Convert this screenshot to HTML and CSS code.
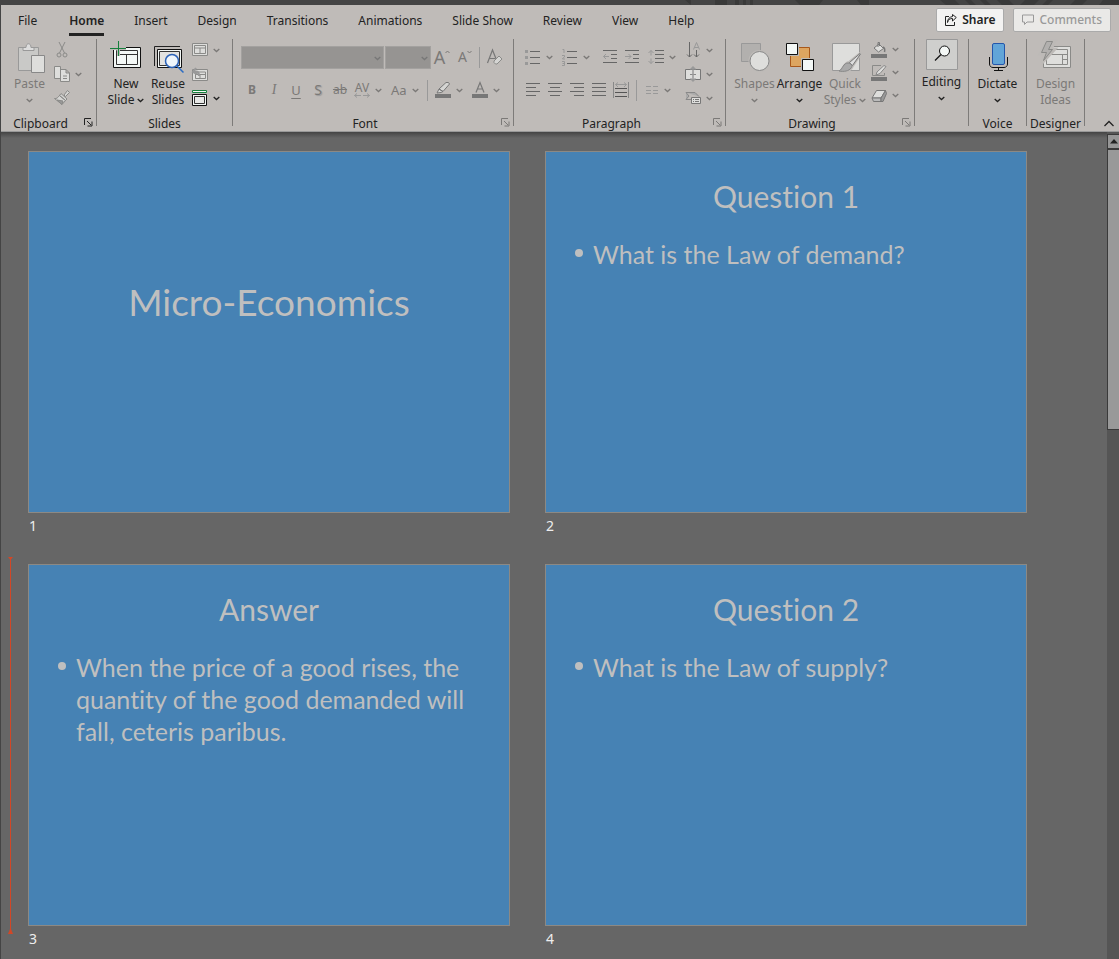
FILE: index.html
```html
<!DOCTYPE html>
<html lang="en">
<head>
<meta charset="utf-8">
<title>Micro-Economics</title>
<link rel="stylesheet" href="styles.css">
</head>
<body>
<svg class="defs" aria-hidden="true">
  <symbol id="chev" viewBox="0 0 7 5"><path d="M.7 1 3.5 3.6 6.300 1" fill="none" stroke="currentColor" stroke-width="1.300"/></symbol>
  <symbol id="launch" viewBox="0 0 9 9"><path d="M.5 7V.5H7M3 3l4 4M8 3.500V8H3.500" fill="none" stroke="currentColor"/></symbol>
</svg>
<div class="strip"><svg width="434" height="5" viewBox="0 0 434 5"><path d="M0 0h6v5zM30 0h12v5H30zM50 0h4v5h-4zM58 0h3v5h-3zM65 0h3v5h-3zM110 0h28l-4 5h-19zM172 0h12v5h-8zM255 0h15l5 5h-14zM280 0h6l5 5h-6zM295 0h6l5 5h-6zM312 0h12l5 5h-12zM340 0h14l-5 5h-14zM362 0h6l-5 5h-6zM390 0h12l-5 5h-12zM418 0h16v5h-20z" fill="#393939"/></svg></div>
<header class="ribbon">
  <div class="top">
    <nav class="tabs">
      <button class="tab file">File</button><button class="tab active"><span>Home</span></button><button class="tab">Insert</button><button class="tab">Design</button><button class="tab">Transitions</button><button class="tab">Animations</button><button class="tab">Slide Show</button><button class="tab">Review</button><button class="tab">View</button><button class="tab">Help</button>
    </nav>
    <div class="actions">
      <button class="act"><svg width="12" height="12" viewBox="0 0 12 12" fill="none" stroke="#222"><path d="M4 2.500H.5v9h9V8M2.500 8.500C3 5.500 5 4.500 7.500 4.500V7L11.300 3.500 7.500.5v2C4.500 3 2.500 5 2.500 8.500z"/></svg>Share</button>
      <button class="act muted"><svg width="12" height="12" viewBox="0 0 12 12" fill="none" stroke="#999"><path d="M.5 1h11v7H5l-2.500 2.500V8h-2z"/></svg>Comments</button>
    </div>
  </div>
  <div class="groups">
    <section class="group clipboard">
      <div class="body">
        <button class="big off"><svg width="32" height="32" viewBox="0 0 32 32"><path d="M4.500 5.500h20v23h-20z" fill="#c9c9c7" stroke="#999"/><path d="M9 8.500V5.500h3c0-5 5-5 5 0h3v3z" fill="#ddd" stroke="#999"/><path d="M17.500 13.500h13v17h-13z" fill="#dededc" stroke="#888"/></svg><span>Paste</span><span><svg class="chev"><use href="#chev"/></svg></span></button>
        <div class="col">
          <button class="menu off" aria-label="Cut"><svg width="16" height="16" viewBox="0 0 16 16" fill="none" stroke="#8a8a88"><path d="M5 0l5.500 11M11 0 5.500 11"/><circle cx="5" cy="13" r="2"/><circle cx="11" cy="13" r="2"/></svg></button>
          <button class="menu off" aria-label="Copy"><svg width="16" height="16" viewBox="0 0 16 16" fill="#dededc" stroke="#8a8a88"><path d="M.5.5h6v12h-6zM6.500 3.500H12l3.500 3.500v8.500h-9zM12 3.500V7h3.500M9 10h4M9 12.500h4"/></svg><svg class="chev"><use href="#chev"/></svg></button>
          <button class="menu off" aria-label="Format Painter"><svg width="16" height="16" viewBox="0 0 16 16" fill="#d5d5d3" stroke="#8a8a88"><path d="M10 5l3.500-4.500 2 2L11.500 6.500zM7 3.500l6 5.500-1.500 1.500-6-5zM5.500 5.500l6 5L8 14.500.5 8.500c2 .5 3.500-1 5-3z"/><path d="M3 10l6 1-1 3.500z" fill="#999"/></svg></button>
        </div>
      </div>
      <div class="name">Clipboard<button class="launch" aria-label="Clipboard options"><svg width="9" height="9"><use href="#launch"/></svg></button></div>
    </section>
    <section class="group slides">
      <div class="body">
        <button class="big"><svg width="32" height="32" viewBox="0 0 32 32"><path d="M3.500 5.500h27v20h-27z" fill="#f4f8f6" stroke="#111"/><path d="M6.500 8.500h21v14h-21zM6.500 12.500h21M16.500 12.500v10" fill="none" stroke="#333"/><path d="M1 6.500h15M8.500-1v15" stroke="#bdbab7" stroke-width="3"/><path d="M0 6.500h16M8.500-1v15" stroke="#15803c"/></svg><span>New</span><span>Slide <svg class="chev"><use href="#chev"/></svg></span></button>
        <button class="big"><svg width="32" height="32" viewBox="0 0 32 32"><path d="M2.500 24V4.500H28" fill="none" stroke="#222"/><path d="M5.500 7.500h24v18h-24z" fill="#f4f8f6" stroke="#111"/><path d="M7.500 9.500h20v14h-20z" fill="#e2e2e0" stroke="#333"/><path d="m25 24 6.500 6.500" stroke="#2b6cc4" stroke-width="1.500"/><circle cx="20" cy="19" r="6.500" fill="#eef5fb" stroke="#2b62b8" stroke-width="1.500"/></svg><span>Reuse</span><span>Slides</span></button>
        <div class="col">
          <button class="menu off" aria-label="Layout"><svg width="16" height="16" viewBox="0 0 16 16" fill="#dededc" stroke="#8a8a88"><path d="M.5 1.500h15v12H.5zM2.500 3.500h11v8h-11zM2.500 6h11M8 6v6"/></svg><svg class="chev"><use href="#chev"/></svg></button>
          <button class="menu off" aria-label="Reset"><svg width="16" height="16" viewBox="0 0 16 16" fill="#dededc" stroke="#8a8a88"><path d="M.5 3.500h15v11H.5zM3.500 6h10v6.500h-10zM4 8.500h9.500M8 8v4.500"/><path d="M7 10c0-5-3-5-5-4M4 2 1 6l4 2" fill="none" stroke="#999" stroke-width="2"/></svg></button>
          <button class="menu" aria-label="Section"><svg width="16" height="16" viewBox="0 0 16 16" fill="#f4f8f6"><path d="M.5.500h14v2H.5z" stroke="#15803c"/><path d="M.5 4.500h14v11H.5z" stroke="#111"/><path d="M2.500 6.500h10v7h-10z" stroke="#333" fill="#e8e8e6"/></svg><svg class="chev"><use href="#chev"/></svg></button>
        </div>
      </div>
      <div class="name">Slides</div>
    </section>
    <section class="group font">
      <div class="body rows">
        <div class="row">
          <label class="combo wide"><select disabled aria-label="Font"><option></option></select><svg class="chev"><use href="#chev"/></svg></label>
          <label class="combo"><select disabled aria-label="Font size"><option></option></select><svg class="chev"><use href="#chev"/></svg></label>
          <button class="tool off grow" aria-label="Increase font size"><span class="up">A</span><svg class="tick" width="5" height="4" viewBox="0 0 5 4"><path d="M.5 3 2.500 1l2 2" fill="none" stroke="currentColor"/></svg></button>
          <button class="tool off shrink" aria-label="Decrease font size"><span>A</span><svg class="tick" width="5" height="4" viewBox="0 0 5 4"><path d="M.5 1 2.500 3l2-2" fill="none" stroke="currentColor"/></svg></button>
          <i class="sep"></i>
          <button class="tool off" aria-label="Clear formatting"><svg width="18" height="18" viewBox="0 0 18 18" fill="none" stroke="#777"><path d="M1.500 15 6.500 2l4 10M3 10.500h6" stroke-width="1.200"/><path d="m8 13 5-5 3 3-5 5H9.500L8 14.500z" fill="#d5d5d3" stroke="#8a8a88"/></svg></button>
        </div>
        <div class="row">
          <button class="tool off bold">B</button><button class="tool off ital">I</button><button class="tool off under">U</button><button class="tool off shade">S</button><button class="tool off strike">ab</button>
          <button class="menu off" aria-label="Character spacing"><span class="av">AV<svg width="16" height="5" viewBox="0 0 16 5"><path d="M3 .5l-2.500 2L3 4.500M.5 2.500H7M13 .5l2.500 2-2.500 2M15.500 2.500H9" fill="none" stroke="#999"/></svg></span><svg class="chev"><use href="#chev"/></svg></button>
          <button class="menu off aa">Aa<svg class="chev"><use href="#chev"/></svg></button>
          <i class="sep"></i>
          <button class="menu off" aria-label="Highlight"><svg width="16" height="16" viewBox="0 0 16 16" fill="#d5d5d3" stroke="#777"><path d="m4 7 7-6.500h2.500L14.500 2 8 9.500zM4 7l4 2.500-2 1-4 .500z"/><path d="M0 12h16v4H0z" fill="#777" stroke="none"/></svg><svg class="chev"><use href="#chev"/></svg></button>
          <button class="menu off" aria-label="Font color"><svg width="16" height="16" viewBox="0 0 16 16"><path d="M4 10.500 8 .5l4 10M5.300 7h5.400" fill="none" stroke="#777" stroke-width="1.200"/><path d="M0 12h16v4H0z" fill="#777"/></svg><svg class="chev"><use href="#chev"/></svg></button>
        </div>
      </div>
      <div class="name">Font<button class="launch off" aria-label="Font options"><svg width="9" height="9"><use href="#launch"/></svg></button></div>
    </section>
    <section class="group para">
      <div class="body">
        <div class="rows">
          <div class="row">
            <button class="menu off" aria-label="Bullets"><svg width="16" height="16" viewBox="0 0 16 16"><path d="M5 2.500h10M5 8.500h10M5 14.500h10" stroke="#666"/><path d="M0 1h3v3H0zM0 7h3v3H0zM0 13h3v3H0z" fill="#999"/></svg><svg class="chev"><use href="#chev"/></svg></button>
            <button class="menu off" aria-label="Numbering"><svg width="16" height="18" viewBox="0 0 16 18"><path d="M5 3.500h10M5 9.500h10M5 15.500h10" stroke="#666"/><path d="M.5 1.500H2V5M0 7.500h2.500v1.500L.5 10.500V11H3M0 13.500h2.500v4H0M.5 15.500h2" stroke="#999" fill="none"/></svg><svg class="chev"><use href="#chev"/></svg></button>
            <span class="pair"><button class="tool off" aria-label="Decrease indent"><svg width="14" height="14" viewBox="0 0 14 14" fill="none"><path d="M0 .5h14M8 4.500h6M8 8.500h6M0 12.500h14" stroke="#666"/><path d="M3 4 .5 6.500 3 9M.5 6.500H6" stroke="#999"/></svg></button><button class="tool off" aria-label="Increase indent"><svg width="14" height="14" viewBox="0 0 14 14" fill="none"><path d="M0 .5h14M8 4.500h6M8 8.500h6M0 12.500h14" stroke="#666"/><path d="M3.500 4 6 6.500 3.500 9M6 6.500H0" stroke="#999"/></svg></button></span>
            <button class="menu off" aria-label="Line spacing"><svg width="16" height="16" viewBox="0 0 16 16" fill="none"><path d="M7 1.500h9M7 5.500h9M7 9.500h9M7 13.500h9" stroke="#666"/><path d="M.5 4 3 1.500 5.500 4M3 1.500v5M.5 12 3 14.500 5.500 12M3 14.500v-5" stroke="#999"/></svg><svg class="chev"><use href="#chev"/></svg></button>
          </div>
          <div class="row">
            <button class="tool off" aria-label="Align left"><svg width="14" height="14" viewBox="0 0 14 14" stroke="#666"><path d="M0 .5h14M0 4.500h10M0 8.500h14M0 12.500h10"/></svg></button><button class="tool off" aria-label="Center"><svg width="14" height="14" viewBox="0 0 14 14" stroke="#666"><path d="M0 .5h14M2 4.500h10M0 8.500h14M2 12.500h10"/></svg></button><button class="tool off" aria-label="Align right"><svg width="14" height="14" viewBox="0 0 14 14" stroke="#666"><path d="M0 .5h14M4 4.500h10M0 8.500h14M4 12.500h10"/></svg></button><button class="tool off" aria-label="Justify"><svg width="14" height="14" viewBox="0 0 14 14" stroke="#666"><path d="M0 .5h14M0 4.500h14M0 8.500h14M0 12.500h14"/></svg></button><button class="tool off" aria-label="Distribute"><svg width="16" height="16" viewBox="0 0 16 16" fill="none"><path d="M.5 0v16M15.500 0v16" stroke="#888"/><path d="M2 6.500h12M2 10.500h12M2 14.500h12" stroke="#555"/><path d="M5 .5 2.500 2.500 5 5M11 .5l2.500 2L11 5M2.500 2.500h11" stroke="#999"/></svg></button>
            <i class="sep"></i>
            <button class="menu off" aria-label="Columns"><svg width="13" height="16" viewBox="0 0 13 16" stroke="#999"><path d="M0 4.500h5M7 4.500h5M0 8.500h5M7 8.500h5M0 11.500h5M7 11.500h5"/></svg><svg class="chev"><use href="#chev"/></svg></button>
          </div>
        </div>
        <div class="col">
          <button class="menu off" aria-label="Text direction"><svg width="16" height="16" viewBox="0 0 16 16" fill="none"><path d="M4.500 0v15M2 12.500 4.500 15 7 12.500M11.500 8v7M9 12.500l2.500 2.500 2.500-2.500" stroke="#666"/><path d="m8.500 7.500 3-7 3 7M9.500 5.500h4" stroke="#999"/></svg><svg class="chev"><use href="#chev"/></svg></button>
          <button class="menu off" aria-label="Align text"><svg width="16" height="16" viewBox="0 0 16 16"><path d="M.5 3.500h15v10H.5z" fill="#dededc" stroke="#777"/><path d="M5 8.500h6" stroke="#888"/><path d="M8 1v14M5.500 3.500 8 1l2.500 2.500M5.500 12.500 8 15l2.500-2.500" fill="none" stroke="#999" stroke-width="1.500"/></svg><svg class="chev"><use href="#chev"/></svg></button>
          <button class="menu off" aria-label="SmartArt"><svg width="16" height="16" viewBox="0 0 16 16"><path d="M1 2.500h9l4 4M1 9.500h5M1 2.500 4 6 1 9.500" fill="#aaa" stroke="#888"/><path d="M6.500 7.500h9v6h-9z" fill="#dededc" stroke="#777"/><path d="M8 9.500h1M10 9.500h4M8 11.500h1M10 11.500h4" stroke="#777"/></svg><svg class="chev"><use href="#chev"/></svg></button>
        </div>
      </div>
      <div class="name">Paragraph<button class="launch off" aria-label="Paragraph options"><svg width="9" height="9"><use href="#launch"/></svg></button></div>
    </section>
    <section class="group drawing">
      <div class="body">
        <button class="big off"><svg width="32" height="32" viewBox="0 0 32 32"><path d="M2.500 1.500h19v18h-19z" fill="#b2b0ae" stroke="#999"/><circle cx="20.500" cy="19" r="11" fill="#bdbab7"/><circle cx="20.500" cy="19" r="9.500" fill="#dededc" stroke="#888"/></svg><span>Shapes</span><span><svg class="chev"><use href="#chev"/></svg></span></button>
        <button class="big"><svg width="32" height="32" viewBox="0 0 32 32"><path d="M6.500 5.500h19v19h-19z" fill="#dda560" stroke="#a8581b"/><path d="M1 0h14v14H1zM17 16h14v14H17z" fill="#bdbab7"/><path d="M2.500 1.500h11v11h-11zM18.500 17.500h11v11h-11z" fill="#f4f8f6" stroke="#111"/></svg><span>Arrange</span><span><svg class="chev"><use href="#chev"/></svg></span></button>
        <button class="big off"><svg width="32" height="32" viewBox="0 0 32 32"><path d="M3.500 1.500h27v27h-27z" fill="#dededc" stroke="#999"/><path d="M20 20 31 11l1 1-8 12c-2 5-7 7-14 6 5-3 4-9 10-10z" fill="#bdbab7" stroke="#bdbab7" stroke-width="2"/><path d="M20.500 20.500 31 11.500l.5.500-8 11.500z" fill="#ddd" stroke="#777"/><path d="M10 29c4-2 4-8 9-8 3 0 5 3 3 5-2 3-7 4-12 3z" fill="#aaa" stroke="#888"/></svg><span>Quick</span><span>Styles <svg class="chev"><use href="#chev"/></svg></span></button>
        <div class="col tight">
          <button class="menu off" aria-label="Shape fill"><svg width="16" height="16" viewBox="0 0 16 16"><path d="m3 6 5-4 4.500 4.500L7.500 10z" fill="#dededc" stroke="#777"/><path d="M7 5V.5h1.500V4" fill="none" stroke="#777"/><path d="M12 5c2 1 2 3 1.500 5" stroke="#777" stroke-width="1.500" fill="none"/><path d="M0 12h16v4H0z" fill="#777"/></svg><svg class="chev"><use href="#chev"/></svg></button>
          <button class="menu off" aria-label="Shape outline"><svg width="16" height="16" viewBox="0 0 16 16"><path d="M10 .5H1.500v10h12V8" fill="none" stroke="#8a8a88"/><path d="m6 7 7-6.500 2 1L9 8.500 5 10z" fill="#dededc" stroke="#888"/><path d="M0 12h16v4H0z" fill="#777"/></svg><svg class="chev"><use href="#chev"/></svg></button>
          <button class="menu off" aria-label="Shape effects"><svg width="16" height="16" viewBox="0 0 16 16" stroke="#777"><path d="M5.500 2.500h9L10 10H1z" fill="#dededc"/><path d="M1 10h9v3.500H2.500z" fill="#bbb"/><path d="m14.500 2.500 1 3L12 13.500h-2V10z" fill="#999"/></svg><svg class="chev"><use href="#chev"/></svg></button>
        </div>
      </div>
      <div class="name">Drawing<button class="launch off" aria-label="Drawing options"><svg width="9" height="9"><use href="#launch"/></svg></button></div>
    </section>
    <section class="group editing">
      <div class="body">
        <button class="big"><svg class="boxed" width="32" height="31" viewBox="0 0 32 31"><path d="M.5.500h31v30H.5z" fill="#cfcfcd" stroke="#999"/><circle cx="18.500" cy="12" r="5" fill="#f4f8f6" stroke="#111"/><path d="m15 15.500-6 6" stroke="#111" stroke-width="1.300"/></svg><span>Editing</span><span><svg class="chev"><use href="#chev"/></svg></span></button>
      </div>
    </section>
    <section class="group voice">
      <div class="body">
        <button class="big"><svg width="32" height="32" viewBox="0 0 32 32"><rect x="10.500" y="1.500" width="12" height="21" rx="1.500" fill="#62a5d8" stroke="#2456ab"/><path d="M7.500 15v7c0 2 1.500 3.500 3.500 3.500h11c2 0 3.500-1.500 3.500-3.500v-7M16.500 25.500v3M12 28.500h9" fill="none" stroke="#111"/></svg><span>Dictate</span><span><svg class="chev"><use href="#chev"/></svg></span></button>
      </div>
      <div class="name">Voice</div>
    </section>
    <section class="group designer">
      <div class="body">
        <button class="big off"><svg width="32" height="32" viewBox="0 0 32 32"><path d="M3.500 4.500h27v21h-27z" fill="#dededc" stroke="#8a8a88"/><path d="M6.500 7.500h21v15h-21zM6.500 12.500h21M22.500 12.500v10M22.500 17.500h5" fill="none" stroke="#8a8a88"/><path d="M7-1h8l-4 8h4L2 21l3-9H0z" fill="#aaa8a6" stroke="#bdbab7" stroke-width="3"/><path d="M6.500-.5h6l-4 8h4l-9 11 3-8h-5z" fill="#b2b0ae" stroke="#8a8a88"/></svg><span>Design</span><span>Ideas</span></button>
      </div>
      <div class="name">Designer</div>
    </section>
    <button class="collapse" aria-label="Collapse the ribbon"><svg width="10" height="7" viewBox="0 0 10 7"><path d="M.5 6 5 1.500 9.500 6" fill="none" stroke="#222" stroke-width="1.300"/></svg></button>
  </div>
</header>
<main class="workspace">
  <div class="sorter">
    <figure><div class="slide cover"><h1>Micro-Economics</h1></div><figcaption>1</figcaption></figure>
    <figure><div class="slide"><h2>Question 1</h2><ul><li>What is the Law of demand?</li></ul></div><figcaption>2</figcaption></figure>
    <figure><div class="slide"><svg class="caret top-end" width="5" height="3" viewBox="0 0 5 3"><path d="M0 0h5L3 2.500H2z" fill="#d24726"/></svg><i class="caret line"></i><svg class="caret bottom-end" width="5" height="5" viewBox="0 0 5 5"><path d="M0 5h5L3 0H2z" fill="#d24726"/></svg><h2>Answer</h2><ul><li>When the price of a good rises, the quantity of the good demanded will fall, ceteris paribus.</li></ul></div><figcaption>3</figcaption></figure>
    <figure><div class="slide"><h2>Question 2</h2><ul><li>What is the Law of supply?</li></ul></div><figcaption>4</figcaption></figure>
  </div>
  <div class="scroll">
    <button class="arrow" aria-label="Scroll up"><svg width="8" height="5" viewBox="0 0 8 5"><path d="M0 4.500 4 0l4 4.500z" fill="#222"/></svg></button>
    <div class="thumb"></div>
  </div>
</main>
</body>
</html>
```
FILE: styles.css
```css
* { box-sizing: border-box; }
body {
  margin: 0;
  min-height: 100vh;
  display: flex;
  flex-direction: column;
  background: #444;
  color: #222;
  font: 12px/16px "Noto Sans", "Open Sans", sans-serif;
}
button {
  border: 0;
  padding: 0;
  background: none;
  color: inherit;
  font: inherit;
}
svg { display: block; flex: none; overflow: visible; }
.defs { display: none; }
.strip { height: 5px; display: flex; justify-content: flex-end; overflow: hidden; }
.ribbon {
  margin-left: 1px;
  background: #bfbbb8;
  border-bottom: 1px solid #999;
}
.top { display: flex; justify-content: space-between; height: 33px; }
.tabs { display: flex; padding-left: 2px; }
.tab { padding: 2px 15px 0; height: 30px; white-space: nowrap; }
.file { margin-right: 2px; }
.active { padding-top: 0; font-weight: 600; }
.active span { display: block; padding: 5px 0 4px; margin-top: 3px; border-bottom: 3px solid #222; }
.actions { display: flex; gap: 9px; padding: 3px 8px 0 0; }
.act {
  display: flex;
  align-items: center;
  gap: 5px;
  height: 24px;
  padding: 0 8px;
  border: 1px solid #aaa;
  border-radius: 2px;
  background: #f3f2f1;
  font-weight: 600;
}
.act.muted { color: #999; background: #eae9e7; font-weight: 500; }

.groups { display: flex; height: 93px; }
.group { position: relative; display: flex; flex-direction: column; flex: none; padding-right: 1px; }
.group::after {
  content: "";
  position: absolute;
  top: 1px;
  right: 0;
  bottom: 5px;
  width: 1px;
  background: #7d7b79;
}
.body { display: flex; flex: 1; }
.name { text-align: center; height: 16px; line-height: 18px; }
.launch { position: absolute; right: 4px; bottom: 4px; }
.clipboard { width: 96px; }
.clipboard .body { padding-left: 7px; }
.clipboard .big { width: 43px; }
.clipboard .name { padding-right: 16px; }
.slides { width: 136px; }
.slides .body { padding-left: 8px; }
.slides .big { width: 42px; }
.font { width: 281px; padding-left: 8px; }
.font .name { padding-right: 24px; }
.para { width: 212px; padding-left: 8px; }
.para .name { padding-right: 24px; }
.para .rows { width: 160px; }
.drawing { width: 189px; }
.drawing .body { padding-left: 6px; }
.drawing .big { width: 45px; }
.drawing .big:nth-child(3) { width: 46px; }
.drawing .name { padding-right: 16px; }
.editing { width: 54px; }
.voice, .designer { width: 58px; }
.editing .big, .voice .big, .designer .big { width: 100%; }
.editing .big { padding-top: 1px; }

.big {
  display: flex;
  flex-direction: column;
  align-items: center;
  align-self: flex-start;
  padding-top: 4px;
}
.big > svg { margin-bottom: 2px; }
.big > span { display: flex; align-items: center; justify-content: center; gap: 3px; height: 16px; white-space: nowrap; }
.big > .boxed { margin-bottom: 4px; }
.chev { width: 7px; height: 5px; }
.off { color: #7b7977; }
.col { display: flex; flex-direction: column; }
.col .menu { height: 24px; }
.tight .menu { height: 23px; }
.menu { display: flex; align-items: center; gap: 5px; width: 37px; height: 24px; padding-left: 3px; }
.rows { display: flex; flex-direction: column; gap: 9px; padding-top: 7px; }
.row { display: flex; align-items: center; height: 24px; }
.tool { display: flex; align-items: center; justify-content: center; width: 22px; height: 24px; }
.pair { display: flex; padding: 0 2px 0 3px; }
.sep { width: 1px; height: 21px; margin: 0 4px 0 2px; background: #999; }
.para .sep { margin: 0 6px 0 4px; }
.combo { position: relative; width: 46px; height: 23px; }
.combo.wide { width: 143px; margin-right: 1px; }
.combo select {
  display: block;
  appearance: none;
  width: 100%;
  height: 100%;
  border: 1px solid #a3a19f;
  border-radius: 0;
  background: #969492;
  opacity: 1;
}
.combo .chev { position: absolute; right: 3px; top: 10px; color: #777; }
.tool .tick { align-self: flex-start; margin-top: 5px; }
.grow { font-size: 18px; }
.grow, .shrink { margin-right: 1px; }
.shrink { font-size: 14px; }
.bold { font-weight: 700; }
.ital { font-family: "Liberation Serif", serif; font-style: italic; font-size: 14px; }
.under { font-size: 13px; text-decoration: underline; text-underline-offset: 3px; }
.shade { text-shadow: 1px 1px 1px #999; font-size: 14px; }
.strike { text-decoration: line-through; }
.av { width: 16px; line-height: 11px; }
.aa { font-size: 13px; }
.collapse { margin-left: auto; align-self: flex-end; padding: 0 5px 4px; }

.workspace {
  flex: 1;
  display: flex;
  margin-left: 1px;
  background: linear-gradient(#444, #666 6px);
}
.sorter {
  flex: 1;
  display: grid;
  grid-template-columns: repeat(auto-fill, 482px);
  align-content: start;
  gap: 27px 35px;
  padding: 19px 27px 0;
}
figure { margin: 0; }
figcaption { height: 24px; padding: 4px 1px; font-size: 14px; line-height: 18px; color: #eee; }
.slide {
  position: relative;
  aspect-ratio: 482 / 362;
  padding: 24px 30px;
  border: 1px solid #8c8984;
  background: #4682b4;
  color: #bfbfbf;
  font-family: Lato, sans-serif;
  font-variant-ligatures: none;
}
.cover { display: flex; align-items: center; justify-content: center; padding-bottom: 84px; }
h1, h2 { margin: 0; font-weight: 400; text-align: center; }
h1 { font-size: 37px; line-height: 44px; }
h2 { font-size: 30px; line-height: 40px; }
ul { margin: 22px 0 0; padding: 0 0 0 17px; list-style: none; font-size: 25px; line-height: 32px; }
li::before {
  content: "";
  float: left;
  width: 8px;
  height: 8px;
  margin: 11px 0 0 -18px;
  border-radius: 50%;
  background: currentColor;
}
.caret { position: absolute; left: -21px; }
.top-end { top: -8px; }
.bottom-end { bottom: -9px; }
.line { top: -8px; bottom: -8px; width: 1px; margin-left: 2px; background: #d24726; }
.scroll { width: 12px; background: #555; padding-top: 2px; }
.arrow {
  display: flex;
  align-items: center;
  justify-content: center;
  width: 100%;
  height: 16px;
  border: solid #3a3a3a;
  border-width: 1px 0 2px 1px;
  background: #969696;
}
.thumb { height: 280px; border: solid #3a3a3a; border-width: 0 0 1px 1px; background: #999; }
```
